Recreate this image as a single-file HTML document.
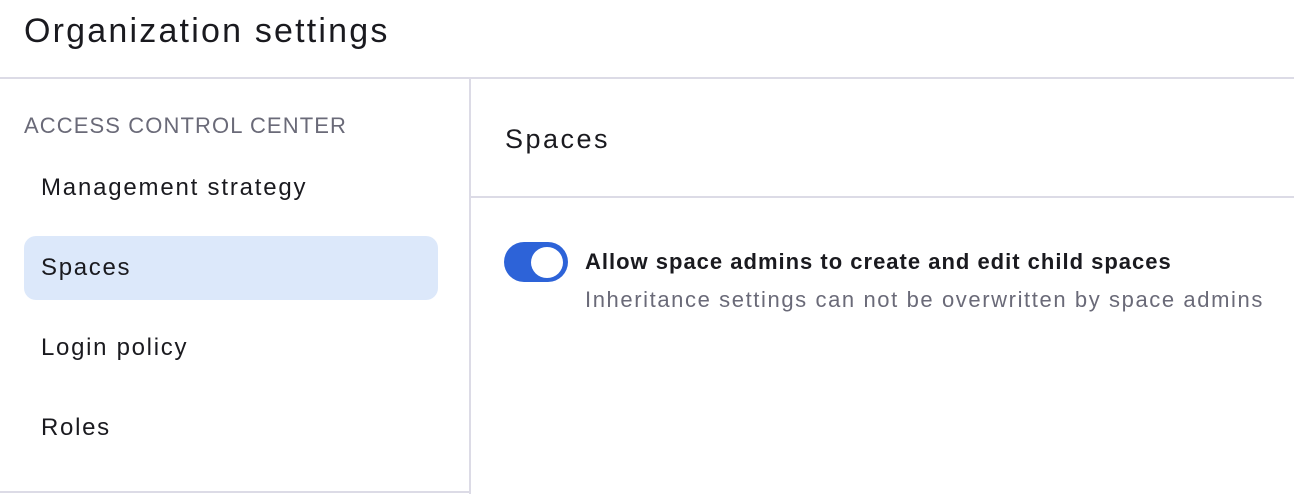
<!DOCTYPE html>
<html><head><style>
*{margin:0;padding:0;box-sizing:border-box}
body{width:1294px;height:494px;background:#fff;font-family:"Liberation Sans",sans-serif;color:#1a1a1f;position:relative;overflow:hidden}
.abs{position:absolute;white-space:nowrap}
</style></head><body>
<div class="abs" style="left:24px;top:11px;font-size:34px;line-height:40px;letter-spacing:2.2px">Organization settings</div>
<div class="abs" style="left:0;top:77px;width:1294px;height:2px;background:#dcdbe6"></div>
<div class="abs" style="left:469px;top:79px;width:2px;height:415px;background:#dcdbe6"></div>
<div class="abs" style="left:0;top:491px;width:471px;height:2px;background:#dcdbe6"></div>
<div class="abs" style="left:471px;top:196px;width:823px;height:2px;background:#dcdbe6"></div>
<div class="abs" style="left:24px;top:113px;font-size:22px;line-height:26px;color:#6a6a78;letter-spacing:1.1px">ACCESS CONTROL CENTER</div>
<div class="abs" style="left:41px;top:173px;font-size:24px;line-height:30px;letter-spacing:1.8px">Management strategy</div>
<div class="abs" style="left:24px;top:236px;width:414px;height:64px;background:#dce8fa;border-radius:12px"></div>
<div class="abs" style="left:41px;top:253px;font-size:24px;line-height:30px;letter-spacing:1.7px">Spaces</div>
<div class="abs" style="left:41px;top:333px;font-size:24px;line-height:30px;letter-spacing:1.7px">Login policy</div>
<div class="abs" style="left:41px;top:413px;font-size:24px;line-height:30px;letter-spacing:1.7px">Roles</div>
<div class="abs" style="left:505px;top:123px;font-size:27px;line-height:32px;letter-spacing:2.5px">Spaces</div>
<div class="abs" style="left:504px;top:242px;width:64px;height:40px;background:#2d63d8;border-radius:20px"></div>
<div class="abs" style="left:531px;top:247px;width:32px;height:31px;background:#fff;border-radius:50%"></div>
<div class="abs" style="left:585px;top:248px;font-size:22px;line-height:28px;font-weight:bold;color:#1a1a1f;letter-spacing:1px">Allow space admins to create and edit child spaces</div>
<div class="abs" style="left:585px;top:286px;font-size:22px;line-height:28px;color:#6a6a78;letter-spacing:1.6px">Inheritance settings can not be overwritten by space admins</div>
</body></html>
